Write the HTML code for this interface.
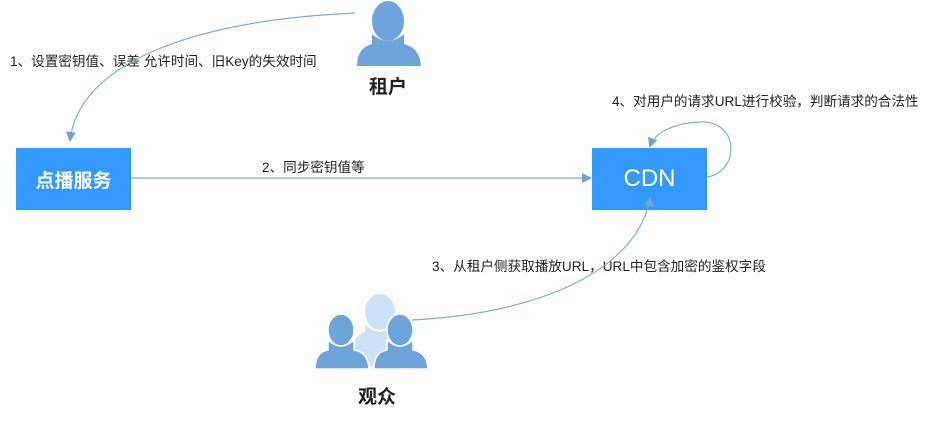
<!DOCTYPE html>
<html><head><meta charset="utf-8"><style>
body{margin:0;width:931px;height:424px;background:#fff;overflow:hidden;font-family:"Liberation Sans","Noto Sans CJK SC",sans-serif;}
svg{position:absolute;left:0;top:0;z-index:2}
.t{position:absolute;font-size:13.6px;color:#222;white-space:nowrap;line-height:1}
.b{position:absolute;font-size:19px;font-weight:bold;color:#222;line-height:1}
.box{position:absolute;background:#3399ff;color:#fff;display:flex;align-items:center;justify-content:center;z-index:1}
</style></head><body>
<svg width="931" height="424">
<defs><marker id="a" markerWidth="10" markerHeight="10" refX="8" refY="5" orient="auto" markerUnits="userSpaceOnUse"><path d="M0,0 L10,5 L0,10z" fill="#6fa3d8"/></marker></defs>
<g fill="none" stroke="#7aaee0" stroke-width="1.2">
<path d="M355,13 C200,20 80,60 70,140" marker-end="url(#a)"/>
<path d="M131,178 L590,178" marker-end="url(#a)"/>
<path d="M707,177 C740,172 740,120 700,122 C675,123 655,132 650,146" marker-end="url(#a)"/>
<path d="M412,320 C560,312 640,260 650,198" marker-end="url(#a)"/>
</g>
<g fill="#6ea4dc">
<ellipse cx="388" cy="21" rx="16" ry="20"/>
<path d="M372,34 Q388,48 404,34 L404,44 Q420,48 421,66 L357,66 Q357,48 372,44z"/>
</g>
<g fill="#cfe3f8">
<ellipse cx="380" cy="312" rx="15" ry="18"/>
<path d="M365,325 Q380,338 395,325 L395,332 Q410,336 412,366 L350,366 Q350,336 365,332z"/>
</g>
<g fill="#6ea4dc" stroke="#fff" stroke-width="1.5">
<ellipse cx="341" cy="330" rx="13" ry="16"/>
<path d="M328,340 Q341,352 354,340 L354,350 Q368,352 369,369 L315,369 Q315,352 328,350z"/>
<ellipse cx="400" cy="330" rx="13" ry="16"/>
<path d="M387,340 Q400,352 413,340 L413,350 Q427,352 428,369 L374,369 Q374,352 387,350z"/>
</g>
</svg>
<div class="t" style="left:10px;top:55px">1、设置密钥值、误差 允许时间、旧Key的失效时间</div>
<div class="b" style="left:369px;top:78px">租户</div>
<div class="t" style="left:612px;top:95px">4、对用户的请求URL进行校验，判断请求的合法性</div>
<div class="t" style="left:262px;top:161px">2、同步密钥值等</div>
<div class="t" style="left:432px;top:260px">3、从租户侧获取播放URL，URL中包含加密的鉴权字段</div>
<div class="b" style="left:358px;top:388px">观众</div>
<div class="box" style="left:16px;top:148px;width:115px;height:62px;font-size:19px;font-weight:bold">点播服务</div>
<div class="box" style="left:592px;top:148px;width:115px;height:62px;font-size:24px">CDN</div>
</body></html>
